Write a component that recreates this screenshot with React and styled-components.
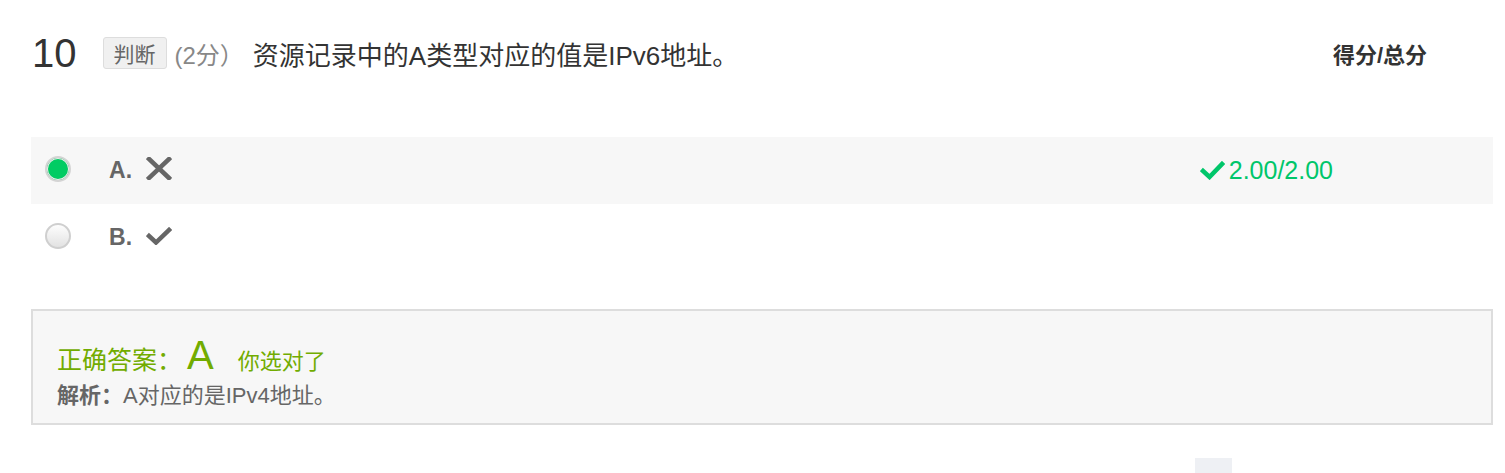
import React from "react";
import styled, { createGlobalStyle } from "styled-components";

const GlobalStyle = createGlobalStyle`
  body {
    margin: 0;
    background: #fff;
    font-family: "Liberation Sans", Arial, "Noto Sans CJK SC", sans-serif;
    color: #333;
  }
`;

const options = [
  { key: "A", mark: "wrong", checked: true },
  { key: "B", mark: "right", checked: false }
];

function App() {
  return (
    <>
      <GlobalStyle />
      <Page>
        <Header>
          <Num>10</Num>
          <Tag>判断</Tag>
          <Points>(2分）</Points>
          <Title>资源记录中的A类型对应的值是IPv6地址。</Title>
          <ScoreHead>得分/总分</ScoreHead>
        </Header>

        <Options>
          {options.map(opt => (
            <Row key={opt.key} selected={opt.checked}>
              <Radio checked={opt.checked} />
              <Letter>{opt.key}.</Letter>
              <Mark>
                {opt.mark === "wrong" ? (
                  <svg width="26" height="23" viewBox="0 0 26 23">
                    <path
                      d="M3 2 L23 21 M23 2 L3 21"
                      stroke="#666"
                      strokeWidth="4.5"
                      strokeLinecap="square"
                    />
                  </svg>
                ) : (
                  <svg width="26" height="18" viewBox="0 0 26 18">
                    <path
                      d="M3 9 L10 15.5 L23 3"
                      stroke="#666"
                      strokeWidth="4.5"
                      fill="none"
                      strokeLinecap="square"
                    />
                  </svg>
                )}
              </Mark>
              {opt.checked && (
                <Score>
                  <svg width="25" height="19" viewBox="0 0 25 19">
                    <path
                      d="M3 10 L9.5 16 L22 3"
                      stroke="#00c66a"
                      strokeWidth="4.5"
                      fill="none"
                      strokeLinecap="square"
                    />
                  </svg>
                  2.00/2.00
                </Score>
              )}
            </Row>
          ))}
        </Options>

        <AnswerBox>
          <AnswerLine>
            <Correct>正确答案：</Correct>
            <BigLetter>A</BigLetter>
            <Verdict>你选对了</Verdict>
          </AnswerLine>
          <Analysis>
            <b>解析：</b>A对应的是IPv4地址。
          </Analysis>
        </AnswerBox>

        <Footer>
          <FloatTab />
        </Footer>
      </Page>
    </>
  );
}

export default App;

const Page = styled.div`
  padding: 0 12px 0 31px;
`;

const Header = styled.div`
  display: flex;
  align-items: center;
  height: 106px;
`;

const Num = styled.span`
  font-size: 40px;
  color: #333;
  margin-left: 1px;
`;

const Tag = styled.span`
  margin-left: 26px;
  height: 30px;
  line-height: 30px;
  padding: 0 10px;
  border: 1px solid #ddd;
  border-radius: 3px;
  background: #f0f0f0;
  color: #666;
  font-size: 21px;
  font-family: "Noto Sans CJK SC", sans-serif;
`;

const Points = styled.span`
  margin-left: 8px;
  font-size: 24px;
  color: #888;
  font-family: "Liberation Sans", "Noto Sans CJK SC", sans-serif;
`;

const Title = styled.span`
  margin-left: 9px;
  font-size: 26px;
  color: #333;
`;

const ScoreHead = styled.span`
  margin-left: auto;
  margin-right: 66px;
  font-size: 22px;
  font-weight: bold;
  color: #333;
`;

const Options = styled.div`
  margin-top: 31px;
`;

const Row = styled.div`
  display: flex;
  align-items: center;
  height: 67px;
  background: ${p => (p.selected ? "#f7f7f7" : "transparent")};
`;

const Radio = styled.span`
  box-sizing: border-box;
  margin-left: 14px;
  width: 26px;
  height: 26px;
  border-radius: 50%;
  border: 2px solid ${p => (p.checked ? "#d4d4d4" : "#cfcfcf")};
  background: ${p =>
    p.checked
      ? "#00cc63"
      : "linear-gradient(#fdfdfd, #e2e2e2)"};
  box-shadow: ${p => (p.checked ? "inset 0 0 0 1px #eaeaea" : "none")};
  margin-top: -4px;
`;

const Letter = styled.span`
  margin-left: 38px;
  font-size: 23px;
  font-weight: bold;
  color: #666;
`;

const Mark = styled.span`
  display: flex;
  margin-left: 14px;
  margin-top: -4px;
`;

const Score = styled.span`
  display: flex;
  align-items: center;
  margin-left: auto;
  margin-right: 160px;
  font-size: 25px;
  color: #00c66a;
  svg {
    margin-right: 4px;
  }
`;

const AnswerBox = styled.div`
  box-sizing: border-box;
  margin-top: 38px;
  height: 116px;
  border: 2px solid #dddddd;
  background: #f7f7f7;
  padding: 22px 24px 0;
`;

const AnswerLine = styled.div`
  display: flex;
  align-items: baseline;
  color: #72ac00;
  font-family: "Noto Sans CJK SC", sans-serif;
  height: 40px;
`;

const Correct = styled.span`
  font-size: 25px;
`;

const BigLetter = styled.span`
  margin-left: 5px;
  font-size: 40px;
  font-family: "Liberation Sans", sans-serif;
`;

const Verdict = styled.span`
  margin-left: 24px;
  font-size: 22px;
`;

const Analysis = styled.div`
  margin-top: 4px;
  font-size: 22px;
  color: #666;
  b {
    font-weight: bold;
  }
`;

const Footer = styled.div`
  display: flex;
  padding-top: 33px;
  padding-left: 1164px;
`;

const FloatTab = styled.div`
  width: 37px;
  height: 20px;
  background: #eef0f4;
`;
